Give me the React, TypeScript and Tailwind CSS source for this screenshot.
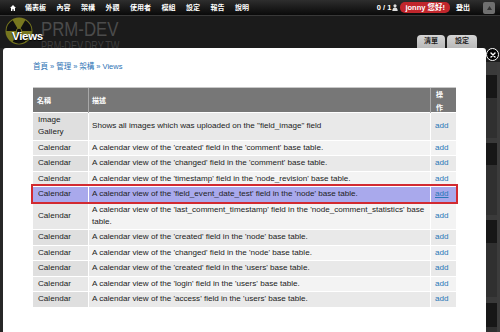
import React from "react";

type Row = { name: string; desc: string; hl?: boolean };

const rows: Row[] = [
  { name: "Image Gallery", desc: 'Shows all images which was uploaded on the "field_image" field' },
  { name: "Calendar", desc: "A calendar view of the 'created' field in the 'comment' base table." },
  { name: "Calendar", desc: "A calendar view of the 'changed' field in the 'comment' base table." },
  { name: "Calendar", desc: "A calendar view of the 'timestamp' field in the 'node_revision' base table." },
  { name: "Calendar", desc: "A calendar view of the 'field_event_date_test' field in the 'node' base table.", hl: true },
  { name: "Calendar", desc: "A calendar view of the 'last_comment_timestamp' field in the 'node_comment_statistics' base table." },
  { name: "Calendar", desc: "A calendar view of the 'created' field in the 'node' base table." },
  { name: "Calendar", desc: "A calendar view of the 'changed' field in the 'node' base table." },
  { name: "Calendar", desc: "A calendar view of the 'created' field in the 'users' base table." },
  { name: "Calendar", desc: "A calendar view of the 'login' field in the 'users' base table." },
  { name: "Calendar", desc: "A calendar view of the 'access' field in the 'users' base table." },
];

const nav = ["儀表板", "內容", "架構", "外觀", "使用者", "模組", "設定", "報告", "說明"];

function sector(a: number, r1: number, r2: number) {
  const rad = (d: number) => (d * Math.PI) / 180;
  const p = (r: number, d: number) => `${(r * Math.cos(rad(d))).toFixed(2)} ${(r * Math.sin(rad(d))).toFixed(2)}`;
  return `M ${p(r1, a - 30)} L ${p(r2, a - 30)} A ${r2} ${r2} 0 0 1 ${p(r2, a + 30)} L ${p(r1, a + 30)} A ${r1} ${r1} 0 0 0 ${p(r1, a - 30)} Z`;
}

function Logo() {
  return (
    <svg width="28" height="28" viewBox="-14 -14 28 28">
      <circle cx="0" cy="0" r="13.5" fill="#77771f" />
      {[-150, -30, 90].map((a) => (
        <path key={a} d={sector(a, 3.2, 12.5)} fill="#101010" />
      ))}
      <circle cx="0" cy="0" r="2.2" fill="#101010" />
    </svg>
  );
}

function TopBar() {
  return (
    <div className="h-[16px] shrink-0 flex items-center bg-linear-to-b from-[#2e2e2e] to-[#0a0a0a] border-b border-[#383838] text-white text-[7px] font-bold leading-none">
      <svg className="ml-[10px]" width="6" height="6" viewBox="0 0 6 6">
        <path d="M3 0 L6 3 L5 3 L5 6 L3.6 6 L3.6 4.2 L2.4 4.2 L2.4 6 L1 6 L1 3 L0 3 Z" fill="#fff" />
      </svg>
      <div className="ml-[9px] flex gap-[10.5px]">
        {nav.map((n) => (
          <span key={n}>{n}</span>
        ))}
      </div>
      <div className="ml-auto mr-[5px] flex items-center">
        <span className="text-[7.5px]">0 / 1</span>
        <svg className="ml-[1px]" width="6" height="7" viewBox="0 0 6 7">
          <circle cx="3" cy="1.8" r="1.6" fill="#ddd" />
          <path d="M0.3 7 Q0.5 3.6 3 3.6 Q5.5 3.6 5.7 7 Z" fill="#ddd" />
        </svg>
        <span className="ml-[2px] h-[11px] px-[5px] rounded-[5px] bg-[#c1262c] flex items-center text-[7.5px]">jonny 您好!</span>
        <span className="ml-[6px]">登出</span>
        <span className="ml-[13px] w-[12px] h-[12px] rounded-[2px] bg-[#6f6f6f] flex items-center justify-center">
          <svg width="5" height="4" viewBox="0 0 5 4">
            <path d="M2.5 0 L5 4 L0 4 Z" fill="#333" />
          </svg>
        </span>
      </div>
    </div>
  );
}

function Header() {
  return (
    <div className="relative h-[32px] shrink-0 flex bg-[#1b1b1b] overflow-hidden">
      <div className="ml-[5px] mt-[1px]">
        <Logo />
      </div>
      <div className="ml-[8px] pt-[2px] flex flex-col items-start">
        <span className="text-[21px] leading-[21px] text-[#4b4b4b] scale-x-[0.8] origin-left">PRM-DEV</span>
        <span className="mt-[1px] text-[12px] leading-[12px] text-[#3e3e3e] scale-x-[0.76] origin-left">PRM-DEV.DRY.TW</span>
      </div>
      <span className="absolute left-[12px] top-[15px] text-[11.5px] leading-[11px] font-bold tracking-[-0.3px] text-white [text-shadow:0_1px_1px_#000]">
        Views
      </span>
      <div className="ml-auto mr-[23px] self-end flex gap-[2px]">
        <span className="w-[28px] h-[13px] rounded-t-[4px] bg-linear-to-b from-[#d4d4d4] to-[#b9b9b9] flex items-center justify-center text-[7px] font-bold text-[#222]">
          清單
        </span>
        <span className="w-[30px] h-[13px] rounded-t-[4px] bg-linear-to-b from-[#d4d4d4] to-[#b9b9b9] flex items-center justify-center text-[7px] font-bold text-[#222]">
          設定
        </span>
      </div>
    </div>
  );
}

function RightStrip() {
  return (
    <div className="w-[14px] shrink-0 flex flex-col">
      <div className="h-[14px] bg-[#1b1b1b]" />
      <div className="flex-1 flex bg-[#3c3c3c] pr-[3px]">
        <div className="flex-1 flex flex-col">
          <div className="h-[13px] bg-[#3a3a3a]" />
          <div className="h-[23px] bg-[#171717]" />
          <div className="h-[40px] bg-[#303030]" />
          <div className="h-[5px] bg-[#3a3a3a]" />
          <div className="h-[22px] bg-[#171717]" />
          <div className="h-[50px] bg-[#303030]" />
          <div className="h-[5px] bg-[#3a3a3a]" />
          <div className="h-[23px] bg-[#171717]" />
          <div className="h-[54px] bg-[#303030]" />
          <div className="h-[6px] bg-[#3a3a3a]" />
          <div className="h-[24px] bg-[#171717]" />
          <div className="flex-1 bg-[#303030]" />
        </div>
      </div>
    </div>
  );
}

export default function App() {
  return (
    <div className="relative w-[500px] h-[332px] overflow-hidden bg-[#1b1b1b] flex flex-col font-['Liberation_Sans','Noto_Sans_CJK_TC',sans-serif]">
      <TopBar />
      <Header />
      <div className="flex flex-1 min-h-0">
        <div className="w-[3px] shrink-0 bg-[#272727]" />
        <div className="flex-1 bg-white rounded-t-[3px] px-[30px] pt-[14px]">
          <div className="text-[7.5px] leading-[10px] text-[#2c72b4] flex gap-[2px]">
            <span>首頁</span>
            <span>»</span>
            <span>管理</span>
            <span>»</span>
            <span>架構</span>
            <span>»</span>
            <span>Views</span>
          </div>
          <div className="mt-[15px] w-[423px] text-[8.1px] leading-[12px] text-[#222]">
            <div className="grid grid-cols-[55px_342px_26px] h-[25px] bg-[#777] border-t border-[#c8c8c8] text-white font-bold text-[7px]">
              <div className="pl-[4px] flex items-center">名稱</div>
              <div className="pl-[3px] flex items-center border-l border-[#a8a8a8]">描述</div>
              <div className="pl-[5px] flex flex-col justify-center leading-[13px] border-l border-[#a8a8a8]">
                <span>操</span>
                <span>作</span>
              </div>
            </div>
            {rows.map((r, i) => {
              const odd = i % 2 === 0;
              const rowBg = r.hl ? "bg-[#a9a9ec]" : odd ? "bg-[#e9e9e9]" : "bg-[#f3f3f3]";
              const nameBg = r.hl ? "bg-[#a9a9ec]" : odd ? "bg-[#dfdfdf]" : "bg-[#e8e8e8]";
              return (
                <div
                  key={i}
                  className={`grid grid-cols-[55px_342px_26px] border-t border-white ${rowBg} ${
                    r.hl ? "relative z-10 outline-2 outline-solid outline-[#d22a31]" : ""
                  }`}
                >
                  <div className={`pl-[5px] pr-[4px] py-[1.25px] flex items-center ${nameBg}`}>{r.name}</div>
                  <div className="pl-[3px] pr-[2px] py-[1.25px] flex items-center border-l border-white">{r.desc}</div>
                  <div className="pl-[4px] flex items-center border-l border-white">
                    <span className={`text-[#2a78b8] ${r.hl ? "underline" : ""}`}>add</span>
                  </div>
                </div>
              );
            })}
          </div>
        </div>
        <RightStrip />
      </div>
      <span className="absolute left-[486px] top-[48px] w-[13px] h-[13px] rounded-full bg-black border-[1.5px] border-white flex items-center justify-center">
        <svg width="6" height="6" viewBox="0 0 6 6">
          <path d="M1 1 L5 5 M5 1 L1 5" stroke="#fff" strokeWidth="1.4" strokeLinecap="round" />
        </svg>
      </span>
    </div>
  );
}
